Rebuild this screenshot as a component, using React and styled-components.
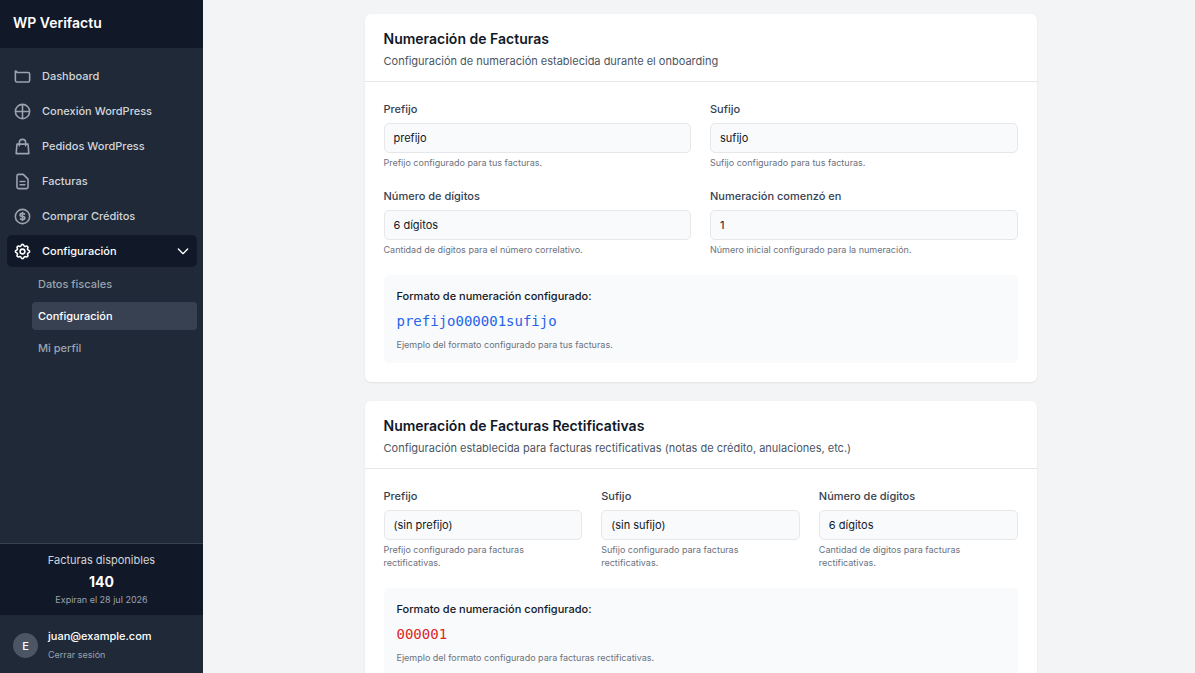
import styled, { createGlobalStyle } from 'styled-components'

const iconPaths = {
  folder: ['M3 7v10a2 2 0 002 2h14a2 2 0 002-2V9a2 2 0 00-2-2H5a2 2 0 00-2-2z'],
  globe: ['M21 12a9 9 0 01-9 9m9-9a9 9 0 00-9-9m9 9H3m9 9a9 9 0 01-9-9m9 9V3m-9 9a9 9 0 019-9'],
  bag: ['M16 11V7a4 4 0 00-8 0v4M5 9h14l1 12H4L5 9z'],
  document: ['M9 12h6m-6 4h6m2 5H7a2 2 0 01-2-2V5a2 2 0 012-2h5.586a1 1 0 01.707.293l5.414 5.414a1 1 0 01.293.707V19a2 2 0 01-2 2z'],
  coin: ['M12 8c-1.657 0-3 .895-3 2s1.343 2 3 2 3 .895 3 2-1.343 2-3 2m0-8c1.11 0 2.08.402 2.599 1M12 8V7m0 1v8m0 0v1m0-1c-1.11 0-2.08-.402-2.599-1M21 12a9 9 0 11-18 0 9 9 0 0118 0z'],
  cog: [
    'M10.325 4.317c.426-1.756 2.924-1.756 3.35 0a1.724 1.724 0 002.573 1.066c1.543-.94 3.31.826 2.37 2.37a1.724 1.724 0 001.065 2.572c1.756.426 1.756 2.924 0 3.35a1.724 1.724 0 00-1.066 2.573c.94 1.543-.826 3.31-2.37 2.37a1.724 1.724 0 00-2.572 1.065c-.426 1.756-2.924 1.756-3.35 0a1.724 1.724 0 00-2.573-1.066c-1.543.94-3.31-.826-2.37-2.37a1.724 1.724 0 00-1.065-2.572c-1.756-.426-1.756-2.924 0-3.35a1.724 1.724 0 001.066-2.573c-.94-1.543.826-3.31 2.37-2.37.996.608 2.296.07 2.572-1.065z',
    'M15 12a3 3 0 11-6 0 3 3 0 016 0z',
  ],
  chevron: ['M19 9l-7 7-7-7'],
}

const menu = [
  { label: 'Dashboard', icon: 'folder' },
  { label: 'Conexión WordPress', icon: 'globe' },
  { label: 'Pedidos WordPress', icon: 'bag' },
  { label: 'Facturas', icon: 'document' },
  { label: 'Comprar Créditos', icon: 'coin' },
]

const submenu = [
  { label: 'Datos fiscales' },
  { label: 'Configuración', active: true },
  { label: 'Mi perfil' },
]

const sections = [
  {
    id: 'facturas',
    title: 'Numeración de Facturas',
    desc: 'Configuración de numeración establecida durante el onboarding',
    columns: 2,
    fields: [
      { label: 'Prefijo', value: 'prefijo', help: 'Prefijo configurado para tus facturas.' },
      { label: 'Sufijo', value: 'sufijo', help: 'Sufijo configurado para tus facturas.' },
      { label: 'Número de dígitos', value: '6 dígitos', help: 'Cantidad de dígitos para el número correlativo.' },
      { label: 'Numeración comenzó en', value: '1', help: 'Número inicial configurado para la numeración.' },
    ],
    example: 'prefijo000001sufijo',
    exampleColor: '#2563eb',
    exampleHelp: 'Ejemplo del formato configurado para tus facturas.',
  },
  {
    id: 'rectificativas',
    title: 'Numeración de Facturas Rectificativas',
    desc: 'Configuración establecida para facturas rectificativas (notas de crédito, anulaciones, etc.)',
    columns: 3,
    fields: [
      { label: 'Prefijo', value: '(sin prefijo)', help: 'Prefijo configurado para facturas rectificativas.' },
      { label: 'Sufijo', value: '(sin sufijo)', help: 'Sufijo configurado para facturas rectificativas.' },
      { label: 'Número de dígitos', value: '6 dígitos', help: 'Cantidad de dígitos para facturas rectificativas.' },
    ],
    example: '000001',
    exampleColor: '#dc2626',
    exampleHelp: 'Ejemplo del formato configurado para facturas rectificativas.',
  },
]

function Icon({ name, size = 19 }) {
  return (
    <IconSvg $size={size} viewBox="0 0 24 24" aria-hidden="true">
      {iconPaths[name].map((d, id) => <path key={id} d={d} />)}
    </IconSvg>
  )
}

function Sidebar() {
  return (
    <SidebarWrapper>
      <Brand>WP Verifactu</Brand>
      <Nav>
        {menu.map(({ label, icon }) => (
          <NavLink key={label} href="#">
            <Icon name={icon} />
            <span>{label}</span>
          </NavLink>
        ))}
        <NavToggle type="button" aria-expanded="true">
          <Icon name="cog" />
          <span>Configuración</span>
          <Icon name="chevron" size={16} />
        </NavToggle>
        <SubNav>
          {submenu.map(({ label, active }) => (
            <SubLink key={label} href="#" $active={active}>{label}</SubLink>
          ))}
        </SubNav>
      </Nav>
      <Credits>
        <p>Facturas disponibles</p>
        <strong>140</strong>
        <small>Expiran el 28 jul 2026</small>
      </Credits>
      <User>
        <Avatar>E</Avatar>
        <div>
          <UserMail>juan@example.com</UserMail>
          <Logout type="button">Cerrar sesión</Logout>
        </div>
      </User>
    </SidebarWrapper>
  )
}

function Section({ section }) {
  const { id, title, desc, columns, fields, example, exampleColor, exampleHelp } = section
  return (
    <Card>
      <CardHeader>
        <h2>{title}</h2>
        <p>{desc}</p>
      </CardHeader>
      <CardBody>
        <FieldGrid $columns={columns}>
          {fields.map(({ label, value, help }, index) => {
            const fieldId = `${id}-${index}`
            return (
              <Field key={fieldId}>
                <label htmlFor={fieldId}>{label}</label>
                <input id={fieldId} type="text" value={value} readOnly aria-describedby={`${fieldId}-help`} />
                <Help id={`${fieldId}-help`}>{help}</Help>
              </Field>
            )
          })}
        </FieldGrid>
        <Example>
          <h3>Formato de numeración configurado:</h3>
          <Code $color={exampleColor}>{example}</Code>
          <Help>{exampleHelp}</Help>
        </Example>
      </CardBody>
    </Card>
  )
}

export default function App() {
  return (
    <Layout>
      <GlobalStyle />
      <Sidebar />
      <Main>
        {sections.map(section => <Section key={section.id} section={section} />)}
      </Main>
    </Layout>
  )
}

const GlobalStyle = createGlobalStyle`
  * {
    box-sizing: border-box;
    margin: 0;
  }
  body {
    background: #f3f4f6;
    color: #111827;
    font-family: Inter, sans-serif;
    font-size: 11px;
    line-height: 16px;
  }
  button, input {
    font: inherit;
  }
  a {
    text-decoration: none;
  }
`

const Layout = styled.div`
  display: flex;
  height: 100vh;
`

const SidebarWrapper = styled.aside`
  display: flex;
  flex-direction: column;
  flex: 0 0 203px;
  background: #1f2937;
`

const Brand = styled.div`
  display: flex;
  align-items: center;
  height: 48px;
  padding: 0 13px 2px;
  background: #111827;
  color: #fff;
  font-size: 14px;
  font-weight: 600;
`

const Nav = styled.nav`
  display: flex;
  flex-direction: column;
  flex: 1;
  gap: 3px;
  padding: 12px 6px 12px 7px;
`

const NavLink = styled.a`
  display: flex;
  align-items: center;
  gap: 10px;
  height: 32px;
  padding: 0 6px;
  border: 0;
  border-radius: 5px;
  background: transparent;
  color: #d1d5db;
  font-weight: 500;
  svg {
    color: #9ca3af;
  }
`

const NavToggle = styled(NavLink).attrs({ as: 'button' })`
  background: #111827;
  color: #fff;
  text-align: left;
  cursor: pointer;
  span {
    flex: 1;
  }
  svg {
    color: #fff;
  }
`

const IconSvg = styled.svg`
  flex: none;
  width: ${props => props.$size}px;
  height: ${props => props.$size}px;
  fill: none;
  stroke: currentColor;
  stroke-width: 2;
  stroke-linecap: round;
  stroke-linejoin: round;
`

const SubNav = styled.div`
  display: flex;
  flex-direction: column;
  gap: 4px;
  padding-left: 25px;
`

const SubLink = styled.a`
  padding: 6px;
  border-radius: 4px;
  background: ${props => props.$active ? '#374151' : 'transparent'};
  color: ${props => props.$active ? '#fff' : '#9ca3af'};
  font-weight: 500;
`

const Credits = styled.div`
  display: flex;
  flex-direction: column;
  align-items: center;
  padding: 8px 13px 9px;
  border-top: 1px solid #374151;
  background: #111827;
  color: #d1d5db;
  strong {
    margin: 4px 0 2px;
    color: #fff;
    font-size: 14px;
    font-weight: 700;
    line-height: 20px;
  }
  small {
    color: #9ca3af;
    font-size: 9px;
    line-height: 12px;
  }
`

const User = styled.div`
  display: flex;
  align-items: center;
  gap: 10px;
  padding: 13px 13px 10px;
`

const Avatar = styled.div`
  display: flex;
  align-items: center;
  justify-content: center;
  width: 25px;
  height: 25px;
  border-radius: 50%;
  background: #4b5563;
  color: #fff;
  font-weight: 500;
`

const UserMail = styled.p`
  color: #fff;
  font-weight: 500;
`

const Logout = styled.button`
  display: block;
  margin-top: 3px;
  padding: 0;
  border: 0;
  background: none;
  color: #9ca3af;
  font-size: 9px;
  cursor: pointer;
`

const Main = styled.main`
  display: flex;
  flex: 1;
  flex-direction: column;
  align-items: center;
  gap: 19px;
  min-width: 0;
  padding: 14px 16px 14px 19px;
  overflow-y: auto;
  scrollbar-width: none;
`

const Card = styled.section`
  flex: none;
  width: 100%;
  max-width: 672px;
  border-radius: 6px;
  background: #fff;
  box-shadow: 0 1px 2px rgba(0, 0, 0, 0.08);
`

const CardHeader = styled.header`
  padding: 14px 19px 12px;
  border-bottom: 1px solid #e5e7eb;
  h2 {
    font-size: 14px;
    font-weight: 600;
    line-height: 21px;
  }
  p {
    margin-top: 4px;
    color: #4b5563;
  }
`

const CardBody = styled.div`
  padding: 19px;
`

const FieldGrid = styled.div`
  display: grid;
  grid-template-columns: repeat(${props => props.$columns}, 1fr);
  gap: 19px;
`

const Field = styled.div`
  label {
    display: block;
    color: #374151;
    font-weight: 500;
  }
  input {
    display: block;
    width: 100%;
    height: 30px;
    margin: 6px 0 3px;
    padding: 0 9px;
    border: 1px solid #e5e7eb;
    border-radius: 5px;
    background: #f9fafb;
    color: #111827;
    outline: none;
  }
`

const Help = styled.p`
  padding-right: 6px;
  color: #6b7280;
  font-size: 9px;
  line-height: 13px;
`

const Example = styled.div`
  margin-top: 19px;
  padding: 13px 13px 12px;
  border-radius: 5px;
  background: #f9fafb;
  h3 {
    font-size: 11px;
    font-weight: 500;
  }
`

const Code = styled.p`
  margin: 6px 0;
  color: ${props => props.$color};
  font-family: "DejaVu Sans Mono", monospace;
  font-size: 14px;
  line-height: 22px;
`
